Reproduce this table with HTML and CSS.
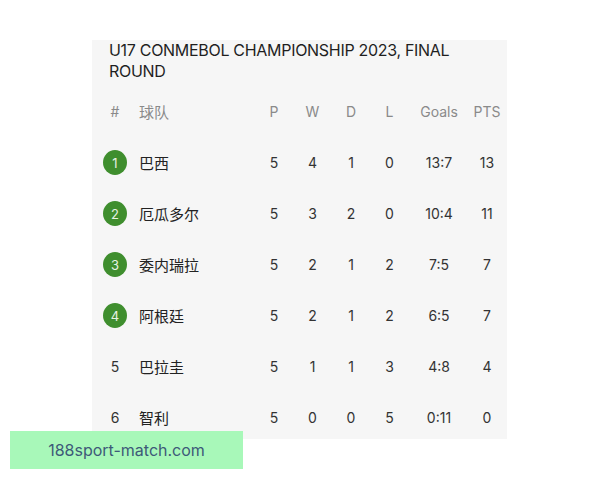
FILE: index.html
```html
<!DOCTYPE html>
<html lang="zh">
<head>
<meta charset="utf-8">
<link rel="stylesheet" href="styles.css">
</head>
<body>
<div class="panel">
  <h1 class="title">U17 CONMEBOL CHAMPIONSHIP 2023, FINAL ROUND</h1>
  <div class="table">
    <div class="row head">
      <span class="rank">#</span><span class="team">球队</span><span>P</span><span>W</span><span>D</span><span>L</span><span>Goals</span><span>PTS</span>
    </div>
    <div class="row">
      <span class="rank"><i class="badge">1</i></span><span class="team">巴西</span><span>5</span><span>4</span><span>1</span><span>0</span><span>13:7</span><span>13</span>
    </div>
    <div class="row">
      <span class="rank"><i class="badge">2</i></span><span class="team">厄瓜多尔</span><span>5</span><span>3</span><span>2</span><span>0</span><span>10:4</span><span>11</span>
    </div>
    <div class="row">
      <span class="rank"><i class="badge">3</i></span><span class="team">委内瑞拉</span><span>5</span><span>2</span><span>1</span><span>2</span><span>7:5</span><span>7</span>
    </div>
    <div class="row">
      <span class="rank"><i class="badge">4</i></span><span class="team">阿根廷</span><span>5</span><span>2</span><span>1</span><span>2</span><span>6:5</span><span>7</span>
    </div>
    <div class="row">
      <span class="rank">5</span><span class="team">巴拉圭</span><span>5</span><span>1</span><span>1</span><span>3</span><span>4:8</span><span>4</span>
    </div>
    <div class="row">
      <span class="rank">6</span><span class="team">智利</span><span>5</span><span>0</span><span>0</span><span>5</span><span>0:11</span><span>0</span>
    </div>
  </div>
</div>
<div class="banner">188sport-match.com</div>
</body>
</html>
```
FILE: styles.css
```css
html, body {
  margin: 0;
  padding: 0;
  background: #ffffff;
}
body {
  width: 600px;
  height: 480px;
  position: relative;
  overflow: hidden;
  font-family: Inter, "Noto Sans", "Noto Sans CJK SC", sans-serif;
}
.panel {
  margin: 40px 0 0 92px;
  width: 415px;
  height: 399px;
  background: #f6f6f6;
  overflow: hidden;
}
.title {
  margin: 0;
  padding: 0 40px 0 17px;
  font-family: Inter, "Noto Sans", sans-serif;
  font-size: 16px;
  font-weight: 400;
  line-height: 21px;
  color: #1f1f1f;
  letter-spacing: -0.3px;
}
.table {
  margin-top: 4px;
  padding-left: 11px;
}
.row {
  display: grid;
  grid-template-columns: 24px 128px 38px 39px 38px 39px 60px 36px;
  height: 51px;
  align-items: center;
  font-size: 14px;
  color: #333333;
  font-family: Inter, "Noto Sans CJK SC", sans-serif;
}
.row > span {
  text-align: center;
}
.row > .team {
  text-align: left;
  padding-left: 12px;
  font-family: "Noto Sans CJK SC", sans-serif;
  font-size: 15px;
  color: #222222;
}
.head {
  color: #8a8a8a;
}
.head > .team {
  color: #8a8a8a;
}
.rank {
  display: flex;
  justify-content: center;
  align-items: center;
}
.badge {
  display: flex;
  width: 25px;
  height: 25px;
  border-radius: 50%;
  background: #3f8e2e;
  color: #e8f2e4;
  font-style: normal;
  font-size: 13px;
  justify-content: center;
  align-items: center;
}
.banner {
  position: absolute;
  left: 10px;
  top: 431px;
  width: 233px;
  height: 38px;
  background: #a8f8b9;
  color: #3d5a78;
  font-family: Inter, sans-serif;
  font-size: 16px;
  line-height: 38px;
  text-align: center;
}
```
